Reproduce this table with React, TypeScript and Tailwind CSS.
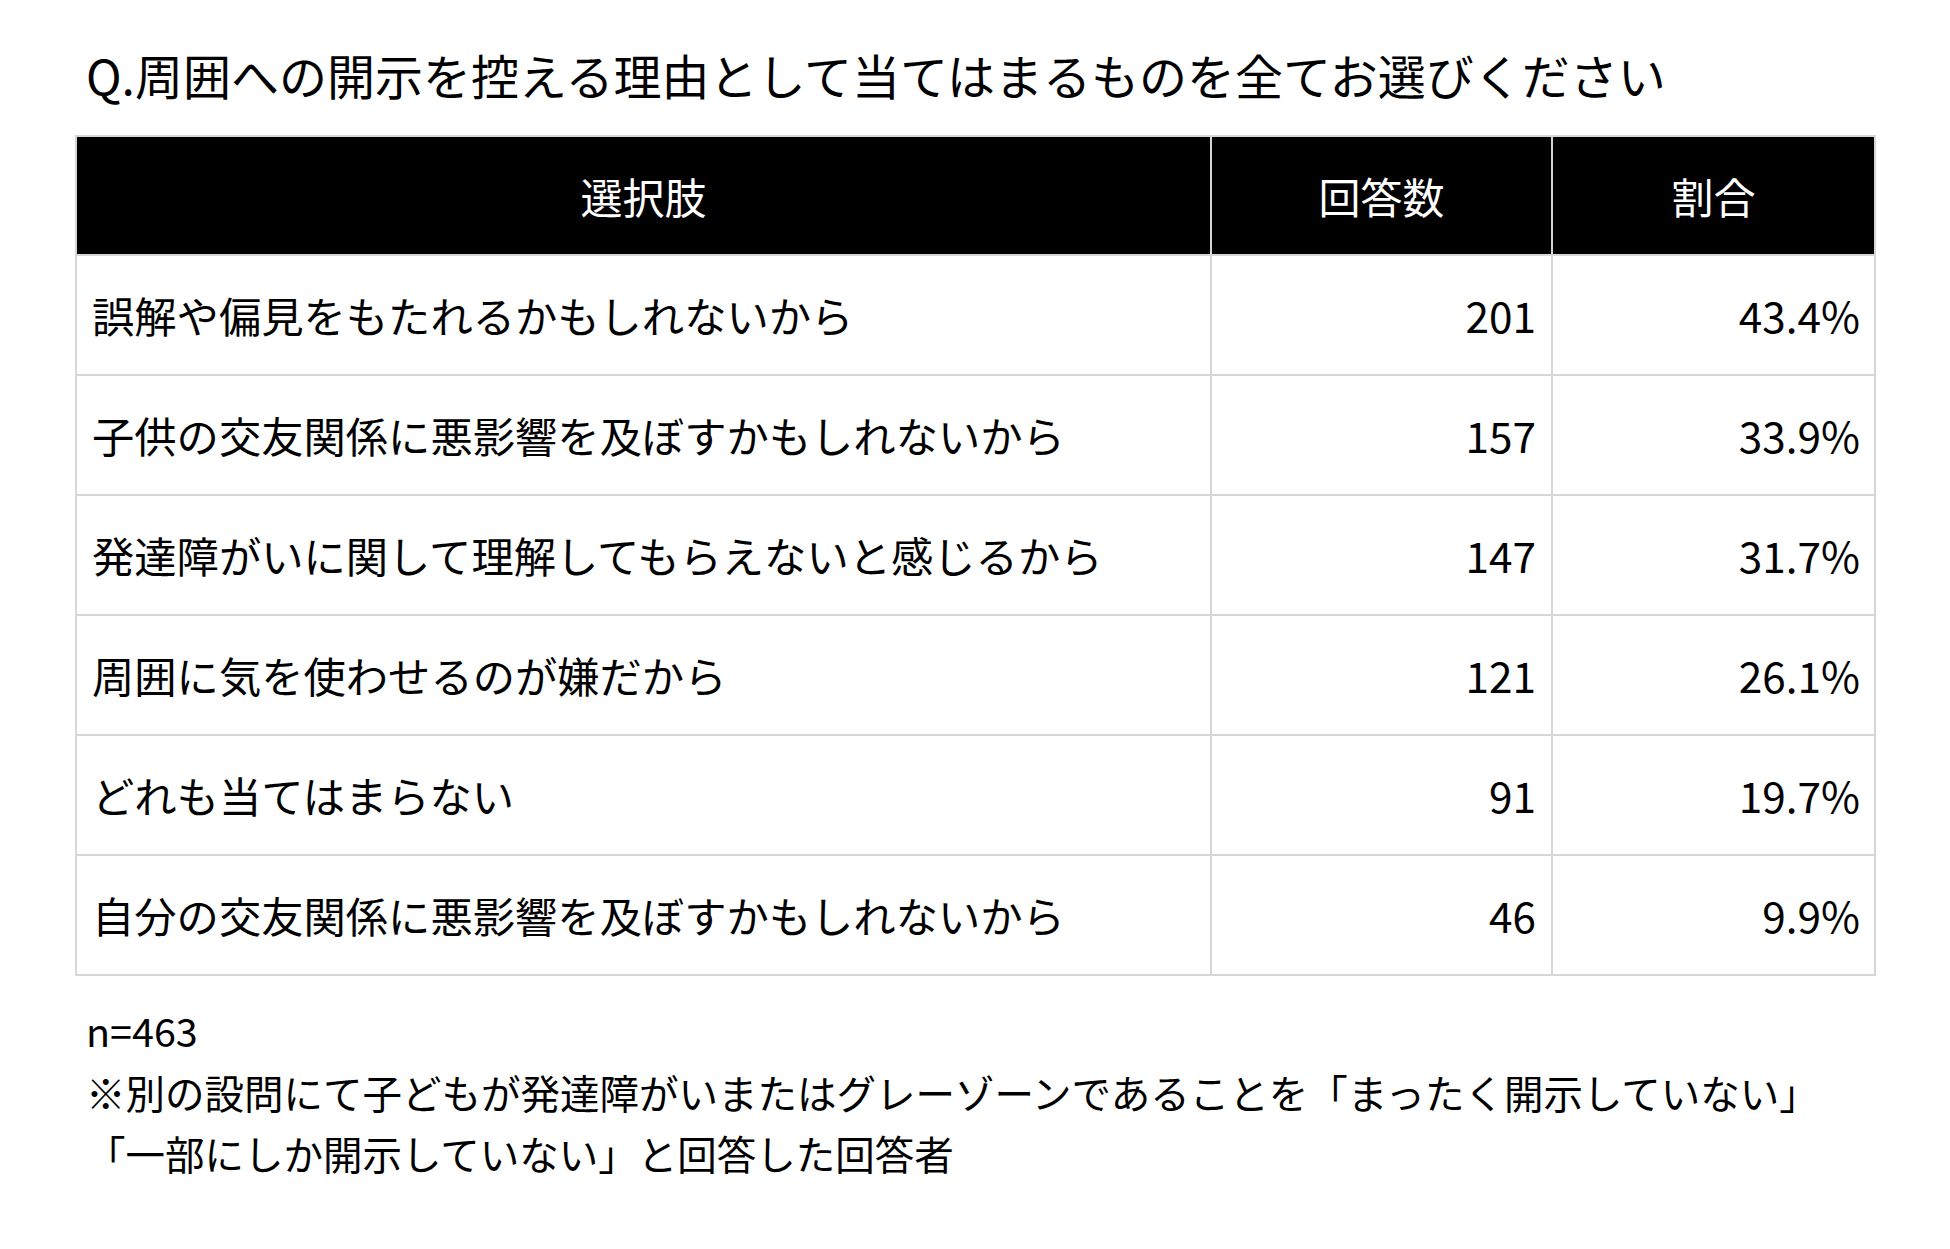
import React from "react";

type Row = {
  label: string;
  count: number;
  rate: string;
};

const rows: Row[] = [
  { label: "誤解や偏見をもたれるかもしれないから", count: 201, rate: "43.4%" },
  { label: "子供の交友関係に悪影響を及ぼすかもしれないから", count: 157, rate: "33.9%" },
  { label: "発達障がいに関して理解してもらえないと感じるから", count: 147, rate: "31.7%" },
  { label: "周囲に気を使わせるのが嫌だから", count: 121, rate: "26.1%" },
  { label: "どれも当てはまらない", count: 91, rate: "19.7%" },
  { label: "自分の交友関係に悪影響を及ぼすかもしれないから", count: 46, rate: "9.9%" },
];

const font = {
  fontFamily: '"Noto Sans CJK JP", "Noto Sans", sans-serif',
};

export default function App() {
  return (
    <div
      className="min-h-[1249px] w-[1950px] bg-white text-black pl-[75px] pt-[42px]"
      style={font}
    >
      <h1 className="ml-[11px] text-[48px] leading-[64px] font-normal">
        Q.周囲への開示を控える理由として当てはまるものを全てお選びください
      </h1>

      <table className="mt-[29px] w-[1799px] border-collapse table-fixed">
        <colgroup>
          <col className="w-[1135px]" />
          <col className="w-[341px]" />
          <col className="w-[323px]" />
        </colgroup>
        <thead>
          <tr className="h-[119px] bg-black text-white">
            <th className="border-2 border-[#d6d6d6] text-[42px] font-normal">選択肢</th>
            <th className="border-2 border-[#d6d6d6] text-[42px] font-normal">回答数</th>
            <th className="border-2 border-[#d6d6d6] text-[42px] font-normal">割合</th>
          </tr>
        </thead>
        <tbody>
          {rows.map((r) => (
            <tr key={r.label} className="h-[120px] text-[42.3px]">
              <td className="border-2 border-[#d6d6d6] pl-[15px] text-left">{r.label}</td>
              <td className="border-2 border-[#d6d6d6] pr-[15px] text-right">{r.count}</td>
              <td className="border-2 border-[#d6d6d6] pr-[14px] text-right">{r.rate}</td>
            </tr>
          ))}
        </tbody>
      </table>

      <div className="mt-[23px] ml-[11px] text-[39.5px] leading-[61.5px]">
        <p>n=463</p>
        <p>※別の設問にて子どもが発達障がいまたはグレーゾーンであることを「まったく開示していない」</p>
        <p>「一部にしか開示していない」と回答した回答者</p>
      </div>
    </div>
  );
}
